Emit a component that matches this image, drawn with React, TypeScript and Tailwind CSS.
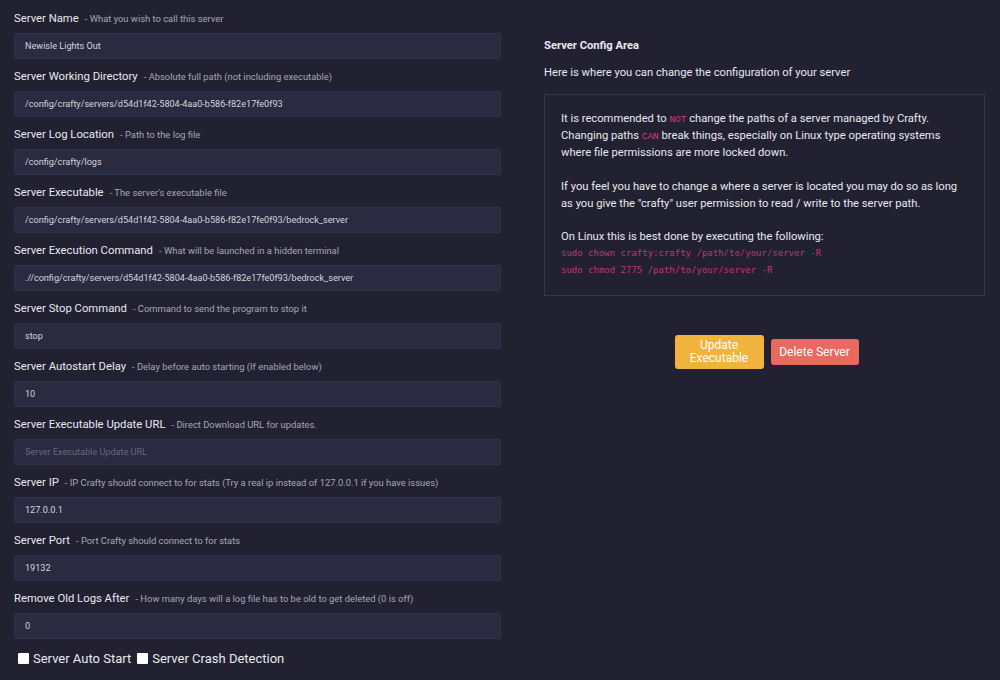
import React from 'react'

type Field = {
  label: string
  hint: string
  value?: string
  placeholder?: string
}

const fields: Field[] = [
  { label: 'Server Name', hint: 'What you wish to call this server', value: 'Newisle Lights Out' },
  { label: 'Server Working Directory', hint: 'Absolute full path (not including executable)', value: '/config/crafty/servers/d54d1f42-5804-4aa0-b586-f82e17fe0f93' },
  { label: 'Server Log Location', hint: 'Path to the log file', value: '/config/crafty/logs' },
  { label: 'Server Executable', hint: "The server's executable file", value: '/config/crafty/servers/d54d1f42-5804-4aa0-b586-f82e17fe0f93/bedrock_server' },
  { label: 'Server Execution Command', hint: 'What will be launched in a hidden terminal', value: './/config/crafty/servers/d54d1f42-5804-4aa0-b586-f82e17fe0f93/bedrock_server' },
  { label: 'Server Stop Command', hint: 'Command to send the program to stop it', value: 'stop' },
  { label: 'Server Autostart Delay', hint: 'Delay before auto starting (If enabled below)', value: '10' },
  { label: 'Server Executable Update URL', hint: 'Direct Download URL for updates.', placeholder: 'Server Executable Update URL' },
  { label: 'Server IP', hint: 'IP Crafty should connect to for stats (Try a real ip instead of 127.0.0.1 if you have issues)', value: '127.0.0.1' },
  { label: 'Server Port', hint: 'Port Crafty should connect to for stats', value: '19132' },
  { label: 'Remove Old Logs After', hint: 'How many days will a log file has to be old to get deleted (0 is off)', value: '0' },
]

function FormRow({ field }: { field: Field }) {
  return (
    <div className="mb-[10px]">
      <div className="flex items-baseline h-4 mb-[6px] leading-4 overflow-hidden">
        <span className="text-[11.3px] text-[#e8e8ee]">{field.label}</span>
        <span className="ml-[6px] text-[9.4px] text-[#a6a6b8]">- {field.hint}</span>
      </div>
      <input
        type="text"
        defaultValue={field.value}
        placeholder={field.placeholder}
        className="block w-full h-[26px] px-[10px] bg-[#2a2a40] border border-[#30304a] rounded-[2px] text-[9.1px] text-[#d4d4dc] placeholder:text-[#68687e] outline-none"
      />
    </div>
  )
}

function Code({ children }: { children: React.ReactNode }) {
  return (
    <code className="text-[9.5px] leading-none uppercase text-[#d63a7a] font-['Liberation_Mono',monospace]">{children}</code>
  )
}

// one wrapped line of the notice, fixed to the paragraph's line height
function Line({ children }: { children: React.ReactNode }) {
  return <div className="h-[17px] leading-[17px] whitespace-nowrap">{children}</div>
}

export default function App() {
  return (
    <div className="w-[1000px] h-[680px] overflow-hidden bg-[#212132] font-['Roboto',sans-serif] flex">
      {/* Settings form */}
      <div className="w-[487px] ml-[14px] pt-[11px] shrink-0">
        {fields.map((f) => (
          <FormRow key={f.label} field={f} />
        ))}
        <div className="flex items-center mt-[5px] ml-[4px] text-[13px] text-[#e8e8ee]">
          <input type="checkbox" className="w-[11px] h-[11px] mr-[4px] appearance-none bg-white rounded-[1px]" />
          <span className="mr-[6px]">Server Auto Start</span>
          <input type="checkbox" className="w-[11px] h-[11px] mr-[4px] appearance-none bg-white rounded-[1px]" />
          <span>Server Crash Detection</span>
        </div>
      </div>

      {/* Info panel */}
      <div className="ml-[43px] mr-[15px] flex-1 pt-[38px] text-[#e8e8ee]">
        <h3 className="text-[11.2px] font-bold leading-4">Server Config Area</h3>
        <p className="text-[11.2px] leading-4 mt-[11px]">Here is where you can change the configuration of your server</p>
        <div className="mt-[13px] border border-[#35354e] px-[16px] pt-[15px] pb-[16px] text-[11.2px] leading-[17px]">
          <Line>
            It is recommended to <Code>not</Code> change the paths of a server managed by Crafty.
          </Line>
          <Line>
            Changing paths <Code>can</Code> break things, especially on Linux type operating systems
          </Line>
          <Line>where file permissions are more locked down.</Line>
          <div className="mt-[17px]">
            <Line>If you feel you have to change a where a server is located you may do so as long</Line>
            <Line>as you give the "crafty" user permission to read / write to the server path.</Line>
          </div>
          <div className="mt-[16px]">
            <Line>On Linux this is best done by executing the following:</Line>
          </div>
          <div className="text-[9px] text-[#c23570] font-['DejaVu_Sans_Mono',monospace] leading-[17px]">
            <div>sudo chown crafty:crafty /path/to/your/server -R</div>
            <div>sudo chmod 2775 /path/to/your/server -R</div>
          </div>
        </div>
        <div className="flex justify-center items-center gap-[7px] mt-[39px] ml-[4px]">
          <button className="w-[89px] h-[34px] bg-[#f0b43c] rounded-[3px] text-white text-[12px] leading-[13px]">
            Update
            <br />
            Executable
          </button>
          <button className="w-[88px] h-[26px] bg-[#e8695e] rounded-[3px] text-white text-[12px]">
            Delete Server
          </button>
        </div>
      </div>
    </div>
  )
}
